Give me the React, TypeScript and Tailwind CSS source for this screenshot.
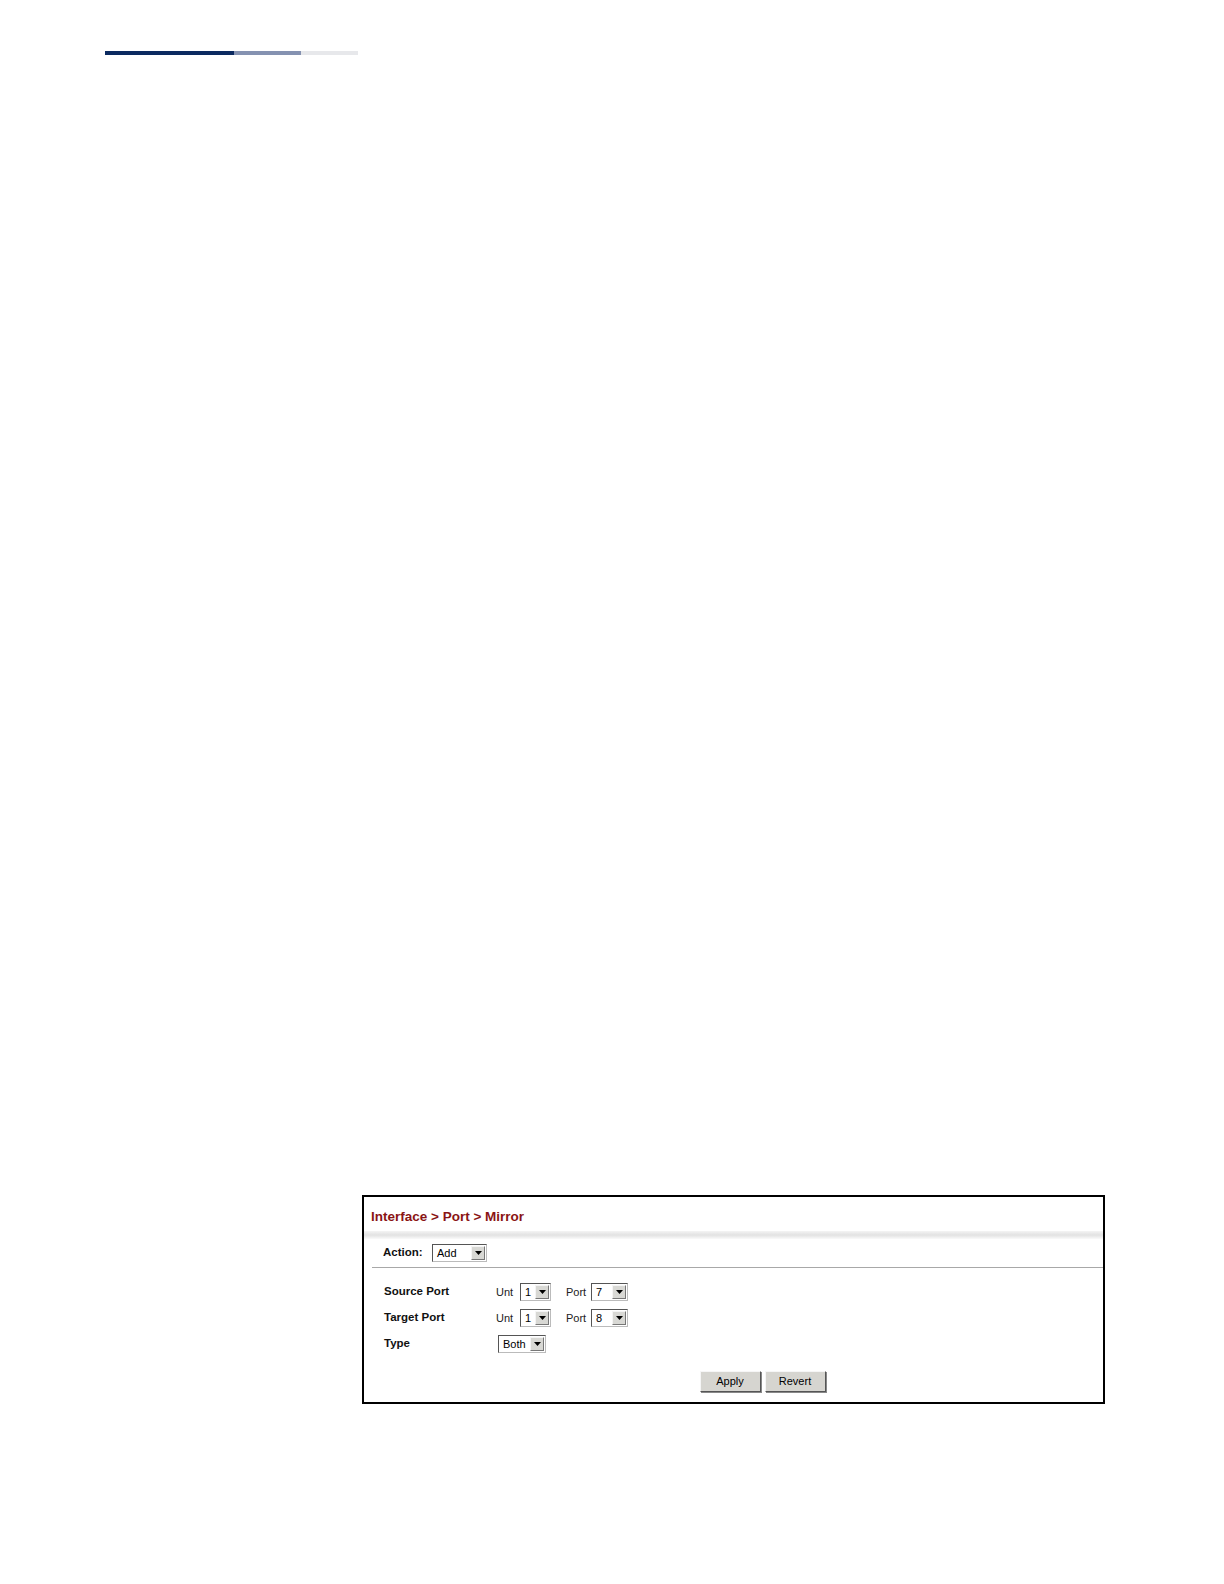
// Port mirror settings page (manual screenshot)

function Select({ value, width }: { value: string; width: string }) {
  return (
    <div
      className={`flex h-[18px] ${width} items-stretch border border-t-[#555] border-l-[#555] border-r-[#bbb] border-b-[#bbb] bg-white`}
    >
      <div className="flex-1 pl-[4px] text-[11px] leading-[16px] text-black">{value}</div>
      <div className="m-[1px] flex w-[14px] items-center justify-center border border-t-[#f4f4f4] border-l-[#f4f4f4] border-r-[#777] border-b-[#777] bg-[#d8d8d4]">
        <svg width="7" height="4" viewBox="0 0 7 4">
          <path d="M0 0h7L3.5 4z" fill="#000" />
        </svg>
      </div>
    </div>
  )
}

function Button({ label }: { label: string }) {
  return (
    <div className="flex h-[21px] w-[61px] items-center justify-center border border-t-[#f6f6f6] border-l-[#f6f6f6] border-r-[#555] border-b-[#555] bg-[#d6d5d0] text-[11px] text-black shadow-[1px_1px_0_#888]">
      {label}
    </div>
  )
}

function PortRow({ label, unit, port }: { label: string; unit: string; port: string }) {
  return (
    <div className="flex h-[26px] items-center">
      <div className="w-[112px] text-[11.5px] font-bold text-[#111]">{label}</div>
      <div className="w-[24px] text-[11px] text-[#222]">Unt</div>
      <Select value={unit} width="w-[31px]" />
      <div className="ml-[15px] w-[25px] text-[11px] text-[#222]">Port</div>
      <Select value={port} width="w-[37px]" />
    </div>
  )
}

export default function App() {
  return (
    <div className="w-[1224px] bg-white pb-[40px] font-['Liberation_Sans',Arial,sans-serif]">
      {/* header rule */}
      <div className="ml-[105px] flex pt-[51px]">
        <div className="h-[4px] w-[129px] bg-[#0b2a60]" />
        <div className="h-[4px] w-[67px] bg-[#8592b1]" />
        <div className="h-[4px] w-[57px] bg-[#e7e8eb]" />
      </div>

      {/* screenshot frame */}
      <div className="ml-[362px] mt-[1140px] h-[209px] w-[743px] border-2 border-black bg-white">
        <div className="px-[7px] pt-[12px] text-[13.5px] font-bold leading-[16px] text-[#8a1414]">
          Interface &gt; Port &gt; Mirror
        </div>
        <div className="mt-[6px] h-[8px] bg-gradient-to-b from-[#f4f4f4] via-[#e2e2e2] to-[#fafafa]" />
        <div className="ml-[8px] border-b border-[#a8a8a8]">
          <div className="flex h-[28px] items-center pl-[11px]">
            <div className="w-[49px] text-[11.5px] font-bold text-[#111]">Action:</div>
            <Select value="Add" width="w-[55px]" />
          </div>
        </div>
        <div className="pl-[20px] pt-[11px]">
          <PortRow label="Source Port" unit="1" port="7" />
          <PortRow label="Target Port" unit="1" port="8" />
          <div className="flex h-[25px] items-center">
            <div className="w-[114px] text-[11.5px] font-bold text-[#111]">Type</div>
            <Select value="Both" width="w-[48px]" />
          </div>
        </div>
        <div className="mt-[15px] flex justify-center gap-[4px] pl-[58px]">
          <Button label="Apply" />
          <Button label="Revert" />
        </div>
      </div>
    </div>
  )
}
